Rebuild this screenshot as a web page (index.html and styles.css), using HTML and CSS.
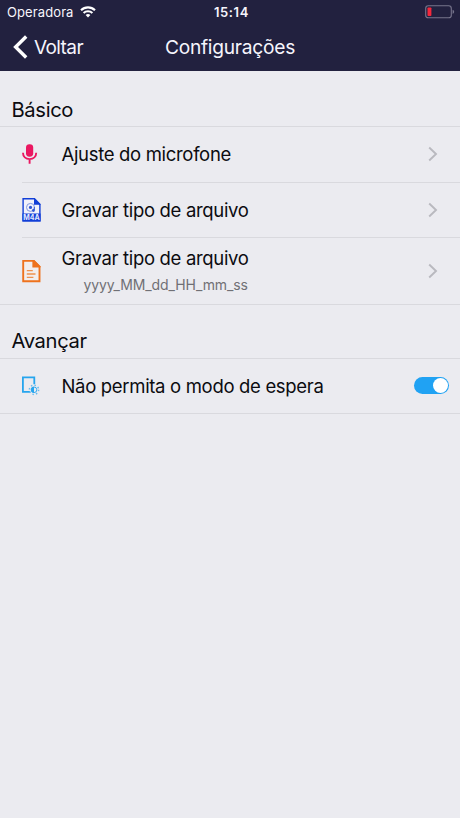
FILE: index.html
```html
<!DOCTYPE html>
<html lang="pt">
<head>
<meta charset="utf-8">
<title>Configurações</title>
<link rel="stylesheet" href="styles.css">
</head>
<body>
<header class="top">
  <div class="status">
    <div class="carrier"><span class="operator">Operadora</span>
      <svg width="16" height="12" viewBox="0 0 16 12" fill="none" stroke="#fff" stroke-width="2.1"><path d="M1 4.2a10 10 0 0 1 14 0M3.6 7a6.3 6.3 0 0 1 8.8 0"/><path d="M8 11.5 5.6 9.1a3.5 3.5 0 0 1 4.8 0z" fill="#fff" stroke="none"/></svg>
    </div>
    <div class="clock">15:14</div>
    <svg class="battery" width="30" height="14" viewBox="0 0 30 14"><rect x=".7" y=".8" width="25.6" height="12" rx="2.6" fill="none" stroke="#77758c" stroke-width="1.1"/><rect x="2.5" y="2.5" width="3.9" height="8.6" rx=".8" fill="#f5283c"/><path d="M27.6 4.7q1.6.6 1.6 2.1t-1.6 2.1z" fill="#77758c"/></svg>
  </div>
  <nav class="nav">
    <div class="back"><svg width="15" height="24" viewBox="0 0 15 24" fill="none" stroke="#fff" stroke-width="3.4"><path d="M13.2 1.5 2.6 12l10.6 10.5"/></svg><span class="back-label">Voltar</span></div>
    <h1 class="title">Configurações</h1>
  </nav>
</header>
<main>
  <h2 class="section first">Básico</h2>
  <ul class="list">
    <li class="row">
      <svg class="icon" width="20" height="28" viewBox="0 0 20 28"><rect x="4" y="4.2" width="7.2" height="12.5" rx="3.4" fill="#ea1761"/><path d="M1 12.7c0 4 2.8 6.4 6.6 6.4s6.6-2.4 6.6-6.4M7.6 19v4.7" fill="none" stroke="#ea1761" stroke-width="1.9"/></svg>
      <div class="body"><span class="label">Ajuste do microfone</span></div>
      <svg class="chevron" width="10" height="16" viewBox="0 0 10 16"><path d="m1.2 1.5 6.8 6.5-6.8 6.5"/></svg>
    </li>
    <li class="row">
      <svg class="icon" width="20" height="28" viewBox="0 0 20 28"><path d="M1.1 2.7h11.2l5.6 5.7v16.3H1.1z" fill="#f1f1fa" stroke="#123fd7" stroke-width="1.4"/><path d="M12 2h.6l6 6.2v.6H12zM.4 17.6h18.2v7.8H.4z" fill="#123fd7"/><circle cx="8.5" cy="11.4" r="4" fill="none" stroke="#7f97e2" stroke-width="1"/><circle cx="8.5" cy="11.4" r="1.6" fill="#3158d4"/><path d="M12.3 11v3.2" stroke="#3158d4"/><circle cx="11.4" cy="14.5" r="1.4" fill="#3158d4"/><text class="tag" x="9.5" y="24.1" text-anchor="middle">M4A</text></svg>
      <div class="body"><span class="label">Gravar tipo de arquivo</span></div>
      <svg class="chevron" width="10" height="16" viewBox="0 0 10 16"><path d="m1.2 1.5 6.8 6.5-6.8 6.5"/></svg>
    </li>
    <li class="row tall">
      <svg class="icon" width="20" height="28" viewBox="0 0 20 28"><path d="M1.2 3.9h10.6l5.7 5.7v14.7H1.2z" fill="#f2eeee" stroke="#ee721d" stroke-width="1.9"/><path d="M10.4 3h1.8l6.2 6.2v1.3h-8z" fill="#ee721d"/><path d="M4.8 13.6h6M4.8 17h8.7M4.8 20.4h6.6" stroke="#ee914f" stroke-width="1.4"/></svg>
      <div class="body"><span class="label">Gravar tipo de arquivo</span><span class="detail">yyyy_MM_dd_HH_mm_ss</span></div>
      <svg class="chevron" width="10" height="16" viewBox="0 0 10 16"><path d="m1.2 1.5 6.8 6.5-6.8 6.5"/></svg>
    </li>
  </ul>
  <h2 class="section second">Avançar</h2>
  <ul class="list">
    <li class="row standby">
      <svg class="icon" width="20" height="28" viewBox="0 0 20 28" fill="none" stroke="#26a5ee"><path d="M7.8 19.8H.9V5.3h11.4v7" stroke-width="1.8"/><circle cx="12" cy="17.8" r="2.8" stroke-width=".9"/><path d="M12 14.8a3 3 0 0 0 0 6z" fill="#26a5ee" stroke="none"/><circle cx="12" cy="17.8" r="4.6" stroke-width="1.5" stroke-dasharray="1.4 2.21" opacity=".7"/></svg>
      <div class="body"><span class="label">Não permita o modo de espera</span></div>
      <span class="switch"><span class="knob"></span></span>
    </li>
  </ul>
</main>
</body>
</html>
```
FILE: styles.css
```css
* { box-sizing: border-box; }
body { margin: 0; height: 818px; background: #ebebf0; color: #0c0c10; font-family: Inter, "Liberation Sans", sans-serif; overflow: hidden; }
svg { display: block; flex: none; }
h1, h2, ul { margin: 0; padding: 0; font-weight: 400; }
ul { list-style: none; }
.top { height: 71px; background: #22213f; color: #f6f5fc; }
.status { height: 23px; padding: 0 5px 0 7px; display: grid; grid-template-columns: 1fr auto 1fr; align-items: center; }
.carrier { display: flex; align-items: center; gap: 6px; }
.operator { font-size: 13px; letter-spacing: 0.1px; }
.clock { font-size: 13px; font-weight: 600; letter-spacing: 0.6px; margin-left: 1px; }
.battery { justify-self: end; }
.nav { height: 48px; padding: 0 14px; display: grid; grid-template-columns: 1fr auto 1fr; align-items: center; }
.back { display: flex; align-items: center; gap: 6px; margin-left: -1px; }
.back-label { font-size: 19px; letter-spacing: -0.6px; }
.title { font-size: 19.2px; letter-spacing: -0.25px; }
.section { padding-left: 11.5px; display: flex; align-items: flex-end; font-size: 20.2px; line-height: 24px; letter-spacing: -0.35px; border-bottom: 1px solid #d9d9de; }
.first { height: 56px; padding-bottom: 4px; }
.second { height: 54px; padding-bottom: 5px; }
.list { border-bottom: 1px solid #d9d9de; }
.row { height: 55px; margin-left: 22px; padding: 0 11px 1px 0; display: flex; align-items: center; }
.row + .row { border-top: 1px solid #d9d9de; }
.row + .tall { height: 67px; }
.standby { height: 54px; }
.body { flex: 1; margin-left: 19.5px; display: flex; flex-direction: column; align-items: flex-start; }
.label { font-size: 18.5px; line-height: 24px; letter-spacing: -0.32px; white-space: nowrap; }
.detail { margin: 5px 0 0 22px; font-size: 14px; line-height: 20px; color: #707075; letter-spacing: -0.1px; }
.chevron { margin-right: 11px; fill: none; stroke: #b9b9bf; stroke-width: 1.9; }
.tag { font: 700 7px Inter, sans-serif; fill: #e4e9ff; }
.switch { width: 35px; height: 17px; padding: 1px; display: flex; justify-content: flex-end; border-radius: 9px; background: #20a2f3; }
.knob { width: 15px; height: 15px; border-radius: 50%; background: #fff; }
```
